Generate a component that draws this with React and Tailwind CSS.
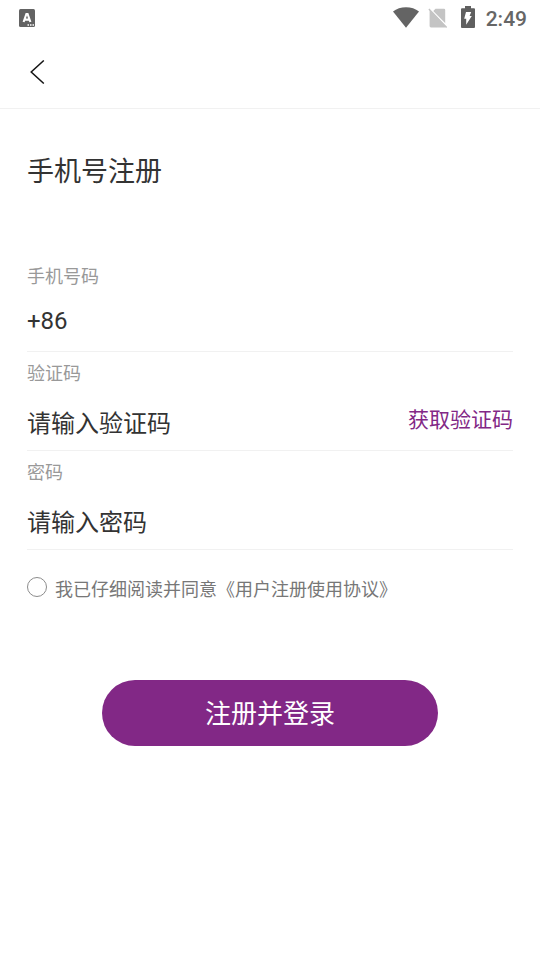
import { useState } from "react"

function StatusBar() {
  return (
    <div className="flex h-9 items-center justify-between pl-[19px] pr-[13px] text-[#666]">
      <svg width="16" height="18" viewBox="0 0 16 18">
        <rect width="16" height="18" rx="1.5" fill="#636363" />
        <path d="M4.600 13 7.400 5h1.200l2.800 8M5.600 10.600h4.800" fill="none" stroke="white" strokeWidth="2.100" />
        <path d="M8.500 16h1.500M11 16h1.500M13.500 16H15" stroke="white" strokeWidth="1.400" />
      </svg>
      <div className="flex items-center">
        <svg className="-mt-px" width="26" height="21" viewBox="0 0 26 21">
          <path d="M0 4.500C3.500 1.800 8 .3 13 .3s9.500 1.500 13 4.200L13 20.700Z" fill="#646464" />
        </svg>
        <svg className="ml-[9px]" width="20" height="21" viewBox="0 0 20 21">
          <path d="M7.500.8H16a1.200 1.200 0 0 1 1.200 1.200v13.300L4.800 3.400Z" fill="#c4c4c4" />
          <path d="M.4 1.600 1.500.6l17.700 18.300-1.100 1.200-.9-.9a1 1 0 0 1-.7.300H3a1.400 1.400 0 0 1-1.400-1.400V3Z" fill="#c4c4c4" />
          <path d="m2.200.4 16.200 16.700" stroke="white" strokeWidth="1" />
        </svg>
        <svg className="-mt-0.5 ml-[13px]" width="14" height="22" viewBox="0 0 14 22">
          <path d="M4 0h6v2.200h3a1 1 0 0 1 1 1V21a1 1 0 0 1-1 1H1a1 1 0 0 1-1-1V3.200a1 1 0 0 1 1-1h3Z" fill="#5f5f5f" />
          <path d="M5 6h5.200L8.600 10h2.200L5.200 18.700V12.800H3.200Z" fill="white" />
        </svg>
        <span className="mt-px ml-[11px] font-['Roboto'] text-[21px] leading-9 font-medium">2:49</span>
      </div>
    </div>
  )
}

function Field({ label, className, children }) {
  return (
    <div className={`border-b border-[#f1f1f1] ${className}`}>
      <div className="text-lg leading-6 text-[#999]">{label}</div>
      {children}
    </div>
  )
}

export default function App() {
  const [agreed, setAgreed] = useState(false)

  return (
    <div className="flex h-screen flex-col overflow-hidden bg-white font-['Noto_Sans_CJK_SC',sans-serif] text-[#333]">
      <StatusBar />

      <header className="flex h-[73px] items-center border-b border-[#f1f1f1] pl-[30px]">
        <button aria-label="返回">
          <svg width="15" height="24" viewBox="0 0 15 24" fill="none">
            <path d="M13.800.5 1.200 12l12.600 11.500" stroke="#151515" strokeWidth="1.500" />
          </svg>
        </button>
      </header>

      <main className="px-[27px]">
        <h1 className="mt-[41px] text-[27px] leading-10">手机号注册</h1>

        <Field label="手机号码" className="mt-[73px] h-[89px]">
          <div className="mt-[18px] font-['Roboto'] text-2xl leading-8">+86</div>
        </Field>
        <Field label="验证码" className="h-[99px] pt-2">
          <div className="mt-[22px] flex items-start justify-between">
            <span className="text-2xl leading-8">请输入验证码</span>
            <button className="-mt-1 text-[21px] leading-8 text-[#822886]">获取验证码</button>
          </div>
        </Field>
        <Field label="密码" className="h-[99px] pt-2">
          <div className="mt-[22px] text-2xl leading-8">请输入密码</div>
        </Field>

        <button className="mt-[26px] flex items-center text-[#777]" onClick={() => setAgreed(!agreed)}>
          <span className="mb-0.5 flex h-5 w-5 items-center justify-center rounded-full border-[1.5px] border-[#8c8c8c]">
            {agreed && <span className="h-2.5 w-2.5 rounded-full bg-[#822886]" />}
          </span>
          <span className="ml-2 text-lg leading-6">我已仔细阅读并同意《用户注册使用协议》</span>
        </button>

        <button className="mx-auto mt-20 block h-[66px] w-[336px] rounded-full bg-[#822886] pb-[3px] text-[26px] text-white">
          注册并登录
        </button>
      </main>
    </div>
  )
}
